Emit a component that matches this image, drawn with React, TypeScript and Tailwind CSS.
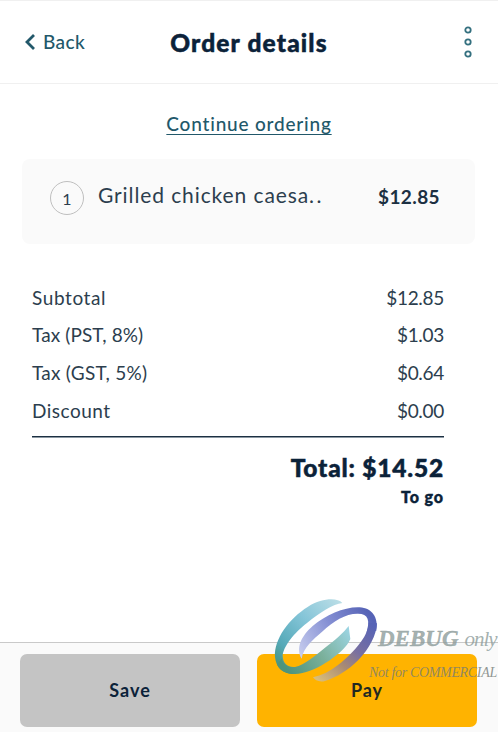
const taxes = [
    { label: "Subtotal", amount: "$12.85", labelClass: "tracking-[0.6px]" },
    { label: "Tax (PST, 8%)", amount: "$1.03", labelClass: "tracking-[0.1px]" },
    { label: "Tax (GST, 5%)", amount: "$0.64", labelClass: "tracking-[0.25px]" },
    { label: "Discount", amount: "$0.00", labelClass: "tracking-[0.5px]" },
];

function Watermark() {
    return (
        <div className="absolute left-[271px] top-[597px] w-[227px] h-[88px] overflow-hidden pointer-events-none">
            <svg viewBox="39 21 330 264" className="w-[110px] h-[88px]" fill="none">
                <defs>
                    <linearGradient id="teal" gradientUnits="userSpaceOnUse" x1="60" y1="235" x2="250" y2="40">
                        <stop offset="0" stopColor="#45937c" />
                        <stop offset="0.22" stopColor="#55a9b8" />
                        <stop offset="0.6" stopColor="#85c5d8" />
                        <stop offset="1" stopColor="#b9dde6" />
                    </linearGradient>
                    <linearGradient id="tealLow" gradientUnits="userSpaceOnUse" x1="90" y1="245" x2="275" y2="120">
                        <stop offset="0" stopColor="#4e947c" />
                        <stop offset="0.5" stopColor="#7bb09b" />
                        <stop offset="1" stopColor="#9bd4e2" />
                    </linearGradient>
                    <linearGradient id="violet" gradientUnits="userSpaceOnUse" x1="125" y1="190" x2="335" y2="75">
                        <stop offset="0" stopColor="#c5cbed" />
                        <stop offset="0.5" stopColor="#8590d4" />
                        <stop offset="1" stopColor="#5663b6" />
                    </linearGradient>
                    <linearGradient id="violetLow" gradientUnits="userSpaceOnUse" x1="340" y1="100" x2="185" y2="275">
                        <stop offset="0" stopColor="#5663b6" />
                        <stop offset="0.4" stopColor="#7a70a0" />
                        <stop offset="0.65" stopColor="#a98b73" />
                        <stop offset="1" stopColor="#d9bd7a" />
                    </linearGradient>
                </defs>
                <path fill="url(#teal)" d="M253 39C238 22 192 24 150 50C92 86 48 148 51 200C53 232 76 252 111 252L111 231C88 233 75 220 74 199C75 170 110 127 147 99C184 68 226 42 253 39Z" />
                <path fill="url(#tealLow)" d="M57 224C67 243 84 252 111 252C140 252 172 238 201 220C238 197 268 170 277 147L272 108C256 129 233 149 201 173C172 196 140 225 111 231C88 234 74 222 71 205Z" />
                <path fill="url(#violet)" d="M131 206C112 175 130 138 164 108C205 74 260 50 305 52C342 54 362 82 355 122L325 128C337 92 331 71 300 71C265 70 225 93 194 124C164 150 137 172 131 206Z" />
                <path fill="url(#violetLow)" d="M357 100C355 135 335 175 301 210C272 240 236 262 201 273C184 278 170 270 165 262C190 257 215 245 239 226C268 203 298 173 317 143C325 130 330 118 332 98Z" />
            </svg>
            <p className="absolute left-[107px] top-[30px] whitespace-nowrap leading-[24px] text-[#8d9c9a]/80 font-['Liberation_Serif',serif] italic">
                <span className="text-[23px] font-bold [-webkit-text-stroke:0.4px]">DEBUG</span>
                <span className="text-[21px] ml-[6px] tracking-[-1px]">only</span>
            </p>
            <p className="absolute left-[98px] top-[66px] whitespace-nowrap leading-[20px] text-[14px] tracking-[-0.33px] text-[#747c78]/80 font-['Liberation_Serif',serif] italic">
                Not for COMMERCIAL
            </p>
        </div>
    );
}

export default function App() {
    return (
        <main className="relative w-[498px] h-[732px] overflow-hidden flex flex-col bg-white text-[#0b2239] font-['Lato',sans-serif]">

            <header className="grid grid-cols-[1fr_auto_1fr] items-center h-[84px] shrink-0 px-[25px] border-y border-[#f0f0f0]">
                <button className="flex items-center gap-[8px] text-[19px] tracking-[0.4px] text-[#22586a] font-medium">
                    <svg viewBox="0 0 10 16" className="w-[10px] h-[16px]" fill="none" stroke="currentColor" strokeWidth="2.8">
                        <path d="M9 1L2 8L9 15" />
                    </svg>
                    <span>Back</span>
                </button>
                <h1 className="mt-[2px] text-[24.5px] font-black tracking-[1.15px] [-webkit-text-stroke:0.5px]">Order details</h1>
                <button className="justify-self-end mr-px text-[#34707f]">
                    <svg viewBox="0 0 8 32" className="w-[8px] h-[32px]" fill="none" stroke="currentColor" strokeWidth="1.8">
                        <circle cx="4" cy="4" r="2.7" />
                        <circle cx="4" cy="16" r="2.7" />
                        <circle cx="4" cy="28" r="2.7" />
                    </svg>
                </button>
            </header>

            <a href="#" className="self-center mt-[27px] text-[19px] leading-[26px] font-medium tracking-[0.8px] text-[#22586a] underline decoration-1 underline-offset-[3px]">Continue ordering</a>

            <section className="flex ml-[22px] mr-[23px] mt-[22px] h-[85px] rounded-lg bg-[#fafafa] pl-[28px] pr-[35px]">
                <span className="flex items-center justify-center mt-[22px] w-[34px] h-[34px] rounded-full border border-[#bfbfbf] pt-px text-[16px] text-[#2c3e4e]">1</span>
                <span className="ml-[14px] mt-[23px] text-[21px] leading-[26px] tracking-[0.9px] text-[#2c3e4e]">
                    Grilled chicken caesa<span className="tracking-[2.6px]">..</span>
                </span>
                <span className="ml-auto mt-[25px] text-[19px] leading-[26px] font-bold tracking-[0.4px] text-[#1c3042]">$12.85</span>
            </section>

            <section className="mx-[32px] mt-[35px] w-[412px]">
                {taxes.map((row) => (
                    <div key={row.label} className="flex justify-between h-[37.8px] items-center text-[19px] text-[#2c3e4e]">
                        <span className={row.labelClass}>{row.label}</span>
                        <span className="tracking-[-0.3px]">{row.amount}</span>
                    </div>
                ))}
                <div className="mt-[6px] h-[2px] border-t border-[#1c3042] bg-[#8c98a2]" />
                <p className="mt-[15px] text-right text-[24.5px] leading-[30px] font-black tracking-[0.8px] [-webkit-text-stroke:0.5px]">Total: $14.52</p>
                <p className="mt-[3px] text-right text-[16px] leading-[22px] font-black tracking-[0.9px] [-webkit-text-stroke:0.4px]">To go</p>
            </section>

            <footer className="flex gap-[17px] mt-auto h-[90px] shrink-0 border-t border-[#c9c9c9] bg-[#fafafa] pl-[20px] pr-[21px] pt-[11px] text-[18px] font-bold tracking-[1px]">
                <button className="w-[220px] h-[73px] rounded-[7px] bg-[#c4c4c4]">Save</button>
                <button className="w-[220px] h-[73px] rounded-[7px] bg-[#ffb300] text-[#222822]">Pay</button>
            </footer>

            <Watermark />
        </main>
    );
}
